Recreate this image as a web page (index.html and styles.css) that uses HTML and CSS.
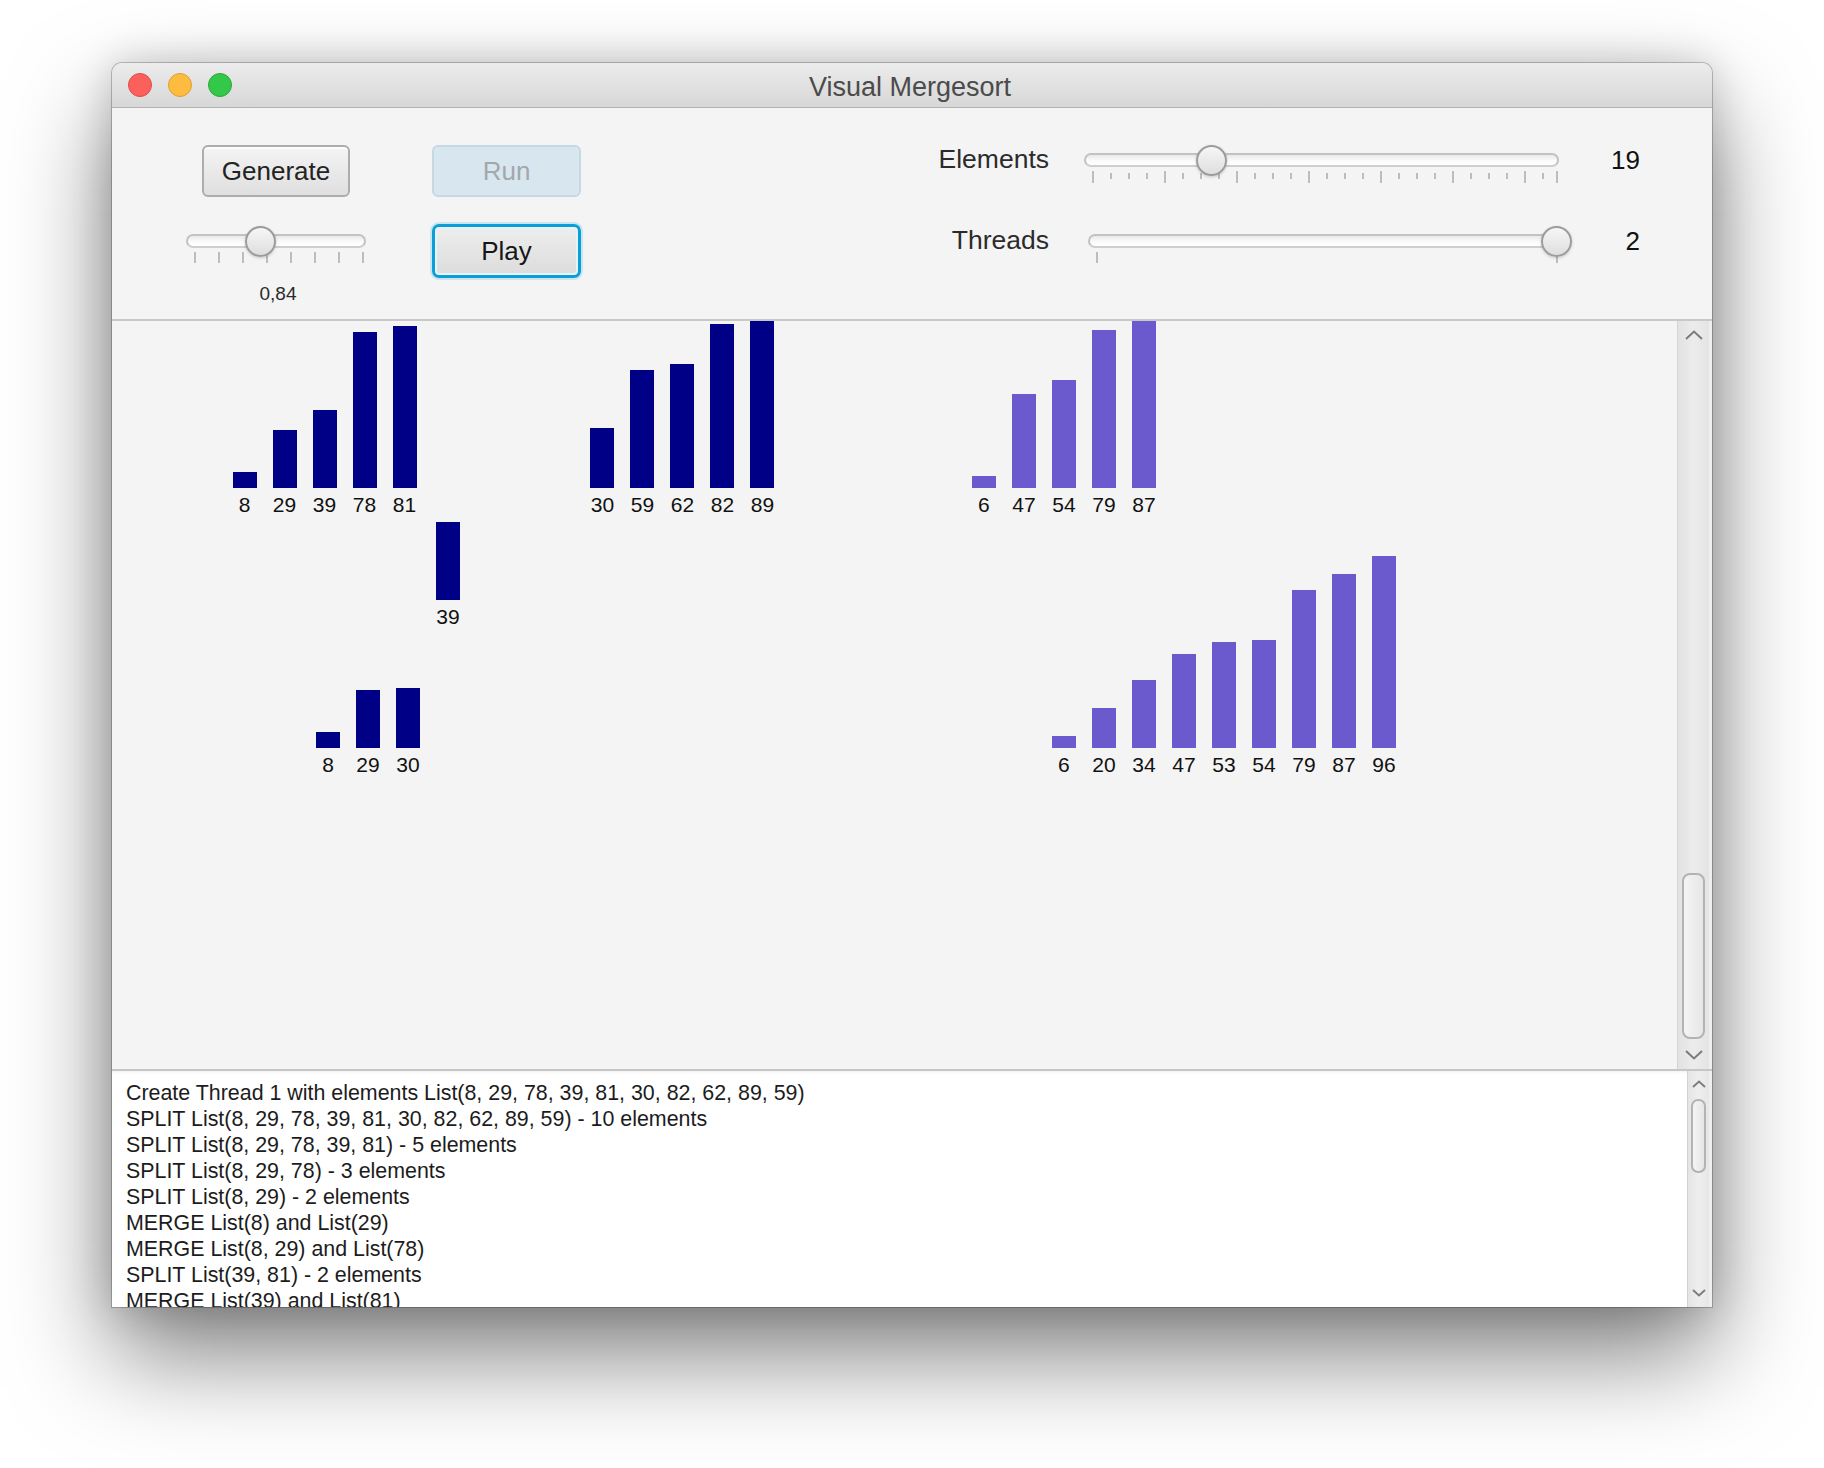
FILE: index.html
```html
<!DOCTYPE html>
<html>
<head>
<meta charset="utf-8">
<title>Visual Mergesort</title>
<link rel="stylesheet" href="styles.css">
</head>
<body>
<div class="window">
  <div class="titlebar">
    <div class="lights">
      <span class="light red"></span>
      <span class="light yellow"></span>
      <span class="light green"></span>
    </div>
    <div class="title">Visual Mergesort</div>
    <div></div>
  </div>

  <div class="toolbar">
    <div class="left-controls">
      <div class="col1">
        <button class="btn">Generate</button>
        <div class="slider small">
          <div class="track"></div>
          <div class="ticks">
            <span class="tick" style="left:9px"></span>
            <span class="tick" style="left:33px"></span>
            <span class="tick" style="left:57px"></span>
            <span class="tick" style="left:81px"></span>
            <span class="tick" style="left:105px"></span>
            <span class="tick" style="left:129px"></span>
            <span class="tick" style="left:153px"></span>
            <span class="tick" style="left:177px"></span>
          </div>
          <div class="thumb" style="left:74px"></div>
        </div>
        <div class="speed">0,84</div>
      </div>
      <div class="col2">
        <button class="btn disabled">Run</button>
        <button class="btn focused">Play</button>
      </div>
    </div>

    <div class="right-controls">
      <div class="label">Elements</div>
      <div class="slider elements">
        <div class="track"></div>
        <div class="ticks">
          <span class="tick" style="left:9px"></span>
          <span class="tick minor" style="left:27px"></span>
          <span class="tick minor" style="left:45px"></span>
          <span class="tick minor" style="left:63px"></span>
          <span class="tick" style="left:81px"></span>
          <span class="tick minor" style="left:99px"></span>
          <span class="tick minor" style="left:117px"></span>
          <span class="tick minor" style="left:135px"></span>
          <span class="tick" style="left:153px"></span>
          <span class="tick minor" style="left:171px"></span>
          <span class="tick minor" style="left:189px"></span>
          <span class="tick minor" style="left:207px"></span>
          <span class="tick" style="left:225px"></span>
          <span class="tick minor" style="left:243px"></span>
          <span class="tick minor" style="left:261px"></span>
          <span class="tick minor" style="left:279px"></span>
          <span class="tick" style="left:297px"></span>
          <span class="tick minor" style="left:315px"></span>
          <span class="tick minor" style="left:333px"></span>
          <span class="tick minor" style="left:351px"></span>
          <span class="tick" style="left:369px"></span>
          <span class="tick minor" style="left:387px"></span>
          <span class="tick minor" style="left:405px"></span>
          <span class="tick minor" style="left:423px"></span>
          <span class="tick" style="left:441px"></span>
          <span class="tick minor" style="left:459px"></span>
          <span class="tick" style="left:473px"></span>
        </div>
        <div class="thumb" style="left:127px"></div>
      </div>
      <div class="value">19</div>

      <div class="label">Threads</div>
      <div class="slider threads">
        <div class="track"></div>
        <div class="ticks">
          <span class="tick" style="left:9px"></span>
          <span class="tick" style="left:469px"></span>
        </div>
        <div class="thumb" style="left:468px"></div>
      </div>
      <div class="value">2</div>
    </div>
  </div>

  <div class="canvas-pane">
    <div class="canvas">
      <div class="chart navy" style="left:120.5px; top:4.7px">
        <div class="col"><div class="bar" style="height:16px"></div><span class="num">8</span></div>
        <div class="col"><div class="bar" style="height:58px"></div><span class="num">29</span></div>
        <div class="col"><div class="bar" style="height:78px"></div><span class="num">39</span></div>
        <div class="col"><div class="bar" style="height:156px"></div><span class="num">78</span></div>
        <div class="col"><div class="bar" style="height:162px"></div><span class="num">81</span></div>
      </div>
      <div class="chart navy" style="left:478.4px; top:-11.3px">
        <div class="col"><div class="bar" style="height:60px"></div><span class="num">30</span></div>
        <div class="col"><div class="bar" style="height:118px"></div><span class="num">59</span></div>
        <div class="col"><div class="bar" style="height:124px"></div><span class="num">62</span></div>
        <div class="col"><div class="bar" style="height:164px"></div><span class="num">82</span></div>
        <div class="col"><div class="bar" style="height:178px"></div><span class="num">89</span></div>
      </div>
      <div class="chart navy" style="left:324px; top:201px">
        <div class="col"><div class="bar" style="height:78px"></div><span class="num">39</span></div>
      </div>
      <div class="chart navy" style="left:204px; top:366.7px">
        <div class="col"><div class="bar" style="height:16px"></div><span class="num">8</span></div>
        <div class="col"><div class="bar" style="height:58px"></div><span class="num">29</span></div>
        <div class="col"><div class="bar" style="height:60px"></div><span class="num">30</span></div>
      </div>
      <div class="chart slate" style="left:859.9px; top:-7.3px">
        <div class="col"><div class="bar" style="height:12px"></div><span class="num">6</span></div>
        <div class="col"><div class="bar" style="height:94px"></div><span class="num">47</span></div>
        <div class="col"><div class="bar" style="height:108px"></div><span class="num">54</span></div>
        <div class="col"><div class="bar" style="height:158px"></div><span class="num">79</span></div>
        <div class="col"><div class="bar" style="height:174px"></div><span class="num">87</span></div>
      </div>
      <div class="chart slate" style="left:939.9px; top:234.7px">
        <div class="col"><div class="bar" style="height:12px"></div><span class="num">6</span></div>
        <div class="col"><div class="bar" style="height:40px"></div><span class="num">20</span></div>
        <div class="col"><div class="bar" style="height:68px"></div><span class="num">34</span></div>
        <div class="col"><div class="bar" style="height:94px"></div><span class="num">47</span></div>
        <div class="col"><div class="bar" style="height:106px"></div><span class="num">53</span></div>
        <div class="col"><div class="bar" style="height:108px"></div><span class="num">54</span></div>
        <div class="col"><div class="bar" style="height:158px"></div><span class="num">79</span></div>
        <div class="col"><div class="bar" style="height:174px"></div><span class="num">87</span></div>
        <div class="col"><div class="bar" style="height:192px"></div><span class="num">96</span></div>
      </div>
    </div>
    <div class="vscroll">
      <div class="arrow">
        <svg width="18" height="10" viewBox="0 0 18 10"><polyline points="1,9 9,1.5 17,9" fill="none" stroke="#7b7b7b" stroke-width="2"/></svg>
      </div>
      <div class="sb-thumb"></div>
      <div class="arrow bottom">
        <svg width="18" height="10" viewBox="0 0 18 10"><polyline points="1,1 9,8.5 17,1" fill="none" stroke="#7b7b7b" stroke-width="2"/></svg>
      </div>
    </div>
  </div>

  <div class="log">
    <div class="log-text">
      <div>Create Thread 1 with elements List(8, 29, 78, 39, 81, 30, 82, 62, 89, 59)</div>
      <div>SPLIT List(8, 29, 78, 39, 81, 30, 82, 62, 89, 59) - 10 elements</div>
      <div>SPLIT List(8, 29, 78, 39, 81) - 5 elements</div>
      <div>SPLIT List(8, 29, 78) - 3 elements</div>
      <div>SPLIT List(8, 29) - 2 elements</div>
      <div>MERGE List(8) and List(29)</div>
      <div>MERGE List(8, 29) and List(78)</div>
      <div>SPLIT List(39, 81) - 2 elements</div>
      <div>MERGE List(39) and List(81)</div>
    </div>
    <div class="log-scroll">
      <div class="arrow small-arrow">
        <svg width="14" height="8" viewBox="0 0 14 8"><polyline points="1,7 7,1.5 13,7" fill="none" stroke="#7b7b7b" stroke-width="1.8"/></svg>
      </div>
      <div class="sb-thumb small-thumb"></div>
      <div class="arrow small-arrow bottom">
        <svg width="14" height="8" viewBox="0 0 14 8"><polyline points="1,1 7,6.5 13,1" fill="none" stroke="#7b7b7b" stroke-width="1.8"/></svg>
      </div>
    </div>
  </div>
</div>
</body>
</html>
```

FILE: styles.css
```css
html, body {
  margin: 0;
  padding: 0;
  background: #ffffff;
}

body {
  font-family: "Liberation Sans", Arial, sans-serif;
  color: #222;
  padding: 63px 0 0 112px;
  height: 1468px;
  box-sizing: border-box;
  overflow: hidden;
}

.window {
  width: 1600px;
  height: 1244px;
  display: flex;
  flex-direction: column;
  border-radius: 10px 10px 0 0;
  overflow: hidden;
  background: #f4f4f4;
  box-shadow: 0 0 0 1px rgba(0, 0, 0, 0.22), 0 48px 100px rgba(0, 0, 0, 0.5), 0 0 40px rgba(0, 0, 0, 0.18);
}

/* ---------- title bar ---------- */
.titlebar {
  height: 44px;
  flex: none;
  display: grid;
  grid-template-columns: 1fr auto 1fr;
  align-items: center;
  background: linear-gradient(#ececec, #d7d7d7);
  border-bottom: 1px solid #b2b2b2;
}

.lights {
  display: flex;
  gap: 16px;
  margin-left: 16px;
}

.light {
  width: 24px;
  height: 24px;
  border-radius: 50%;
  box-sizing: border-box;
}

.red { background: #fc605c; border: 1px solid #dd4b47; }
.yellow { background: #fdbc40; border: 1px solid #dd9f32; }
.green { background: #34c84a; border: 1px solid #28a838; }

.title {
  font-size: 27px;
  color: #4b4b4b;
  padding-top: 5px;
  margin-right: 4px;
}

/* ---------- toolbar ---------- */
.toolbar {
  height: 211px;
  flex: none;
  display: flex;
  background: #f4f4f4;
}

.left-controls {
  display: flex;
  gap: 66px;
  margin-left: 74px;
  padding-top: 37px;
}

.col1 {
  width: 180px;
  display: flex;
  flex-direction: column;
  align-items: center;
}

.col2 {
  width: 149px;
  display: flex;
  flex-direction: column;
}

.btn {
  font-family: "Liberation Sans", Arial, sans-serif;
  font-size: 26px;
  color: #232323;
  width: 148px;
  height: 52px;
  box-sizing: border-box;
  border: 2px solid #adadad;
  border-radius: 6px;
  background: linear-gradient(#f4f4f4, #dfdfdf);
  box-shadow: inset 0 2px 0 #fbfbfb;
  padding: 0;
  margin: 0;
}

.col2 .btn {
  width: 149px;
}

.btn.disabled {
  background: #d8e7ef;
  border-color: #c5d8e3;
  box-shadow: none;
  color: #a2a8ac;
}

.btn.focused {
  margin-top: 27px;
  height: 54px;
  border: 3px solid #0a9fd6;
  border-radius: 7px;
  background: linear-gradient(#eeeeee, #dcdcdc);
  box-shadow: 0 0 0 2px rgba(10, 159, 214, 0.18), inset 0 0 0 2px #e8f3f8;
  color: #161616;
}

/* ---------- sliders ---------- */
.slider {
  position: relative;
  height: 32px;
}

.slider.small {
  width: 180px;
  margin-top: 28px;
}

.track {
  margin-top: 9px;
  height: 14px;
  box-sizing: border-box;
  border-radius: 7px;
  border: 2px solid #c2c2c2;
  border-bottom-color: #cecece;
  background: linear-gradient(#e9e9e9, #fafafa 55%, #ffffff);
}

.ticks {
  position: absolute;
  top: 27px;
  left: 0;
  right: 0;
  height: 12px;
}

.tick {
  position: absolute;
  top: 0;
  width: 2px;
  height: 12px;
  margin-left: -1px;
  background: #bdbdbd;
}

.tick.minor {
  top: 2px;
  height: 6px;
}

.slider.small .tick,
.slider.threads .tick {
  height: 11px;
}

.thumb {
  position: absolute;
  top: 0.5px;
  width: 31px;
  height: 31px;
  margin-left: -15.5px;
  box-sizing: border-box;
  border-radius: 50%;
  border: 2px solid #9c9c9c;
  background: linear-gradient(#f6f6f6, #dedede);
  box-shadow: 0 1px 3px rgba(0, 0, 0, 0.18);
}

.speed {
  margin-top: 25px;
  font-size: 19px;
  line-height: 24px;
  color: #2a2a2a;
  padding-left: 4px;
}

.right-controls {
  margin-left: 348px;
  padding-top: 36px;
  display: grid;
  grid-template-columns: 155px 487px 69px;
  grid-auto-rows: 32px;
  row-gap: 49px;
  align-items: center;
}

.label {
  text-align: right;
  padding-right: 35px;
  font-size: 26.5px;
  color: #2b2b2b;
  margin-top: -2px;
}

.slider.elements {
  width: 475px;
}

.slider.threads {
  width: 481px;
  margin-left: 4px;
}

.value {
  text-align: right;
  font-size: 26px;
  color: #111;
}

/* ---------- canvas ---------- */
.canvas-pane {
  height: 748px;
  flex: none;
  display: flex;
  border-top: 2px solid #c8c8c8;
}

.canvas {
  flex: 1;
  position: relative;
  overflow: hidden;
  background: #f4f4f4;
}

.chart {
  position: absolute;
  display: flex;
  align-items: flex-end;
  gap: 16px;
}

.chart.navy { color: #000086; }
.chart.slate { color: #6a5acd; }

.col {
  width: 24px;
  display: flex;
  flex-direction: column;
  align-items: center;
}

.bar {
  width: 24px;
  background: currentColor;
}

.num {
  height: 36px;
  line-height: 34px;
  font-size: 21px;
  color: #111;
  white-space: nowrap;
}

.vscroll {
  flex: none;
  display: flex;
  flex-direction: column;
  align-items: center;
  box-sizing: border-box;
  border-left: 1px solid #d4d4d4;
  border-right: 3px solid #efefef;
  width: 35px;
  background: linear-gradient(to right, #e2e2e2, #ececec 50%, #e4e4e4);
}

.arrow {
  height: 28px;
  flex: none;
  display: flex;
  align-items: center;
  justify-content: center;
}

.arrow.bottom {
  margin-top: auto;
}

.sb-thumb {
  margin-top: 524px;
  width: 23px;
  height: 166px;
  flex: none;
  box-sizing: border-box;
  border: 2px solid #b3b3b3;
  border-radius: 8px;
  background: linear-gradient(to right, #f4f4f4, #e6e6e6);
}

/* ---------- log ---------- */
.log {
  flex: 1;
  display: flex;
  background: #ffffff;
  border-top: 2px solid #c6c6c6;
  min-height: 0;
}

.log-text {
  flex: 1;
  padding: 9px 0 0 14px;
  font-size: 21.4px;
  line-height: 26px;
  color: #1c1c1c;
  overflow: hidden;
  white-space: nowrap;
  box-shadow: inset 0 3px 3px -2px rgba(0, 0, 0, 0.06);
}

.log-scroll {
  width: 25px;
  flex: none;
  display: flex;
  flex-direction: column;
  align-items: center;
  box-sizing: border-box;
  border-left: 1px solid #d2d2d2;
  border-right: 3px solid #efefef;
  background: linear-gradient(to right, #e4e4e4, #eeeeee 50%, #e6e6e6);
}

.small-arrow {
  height: 26px;
}

.small-arrow.bottom {
  height: 28px;
}

.small-thumb {
  margin-top: 2px;
  width: 15px;
  height: 74px;
  border-radius: 7px;
}
```
